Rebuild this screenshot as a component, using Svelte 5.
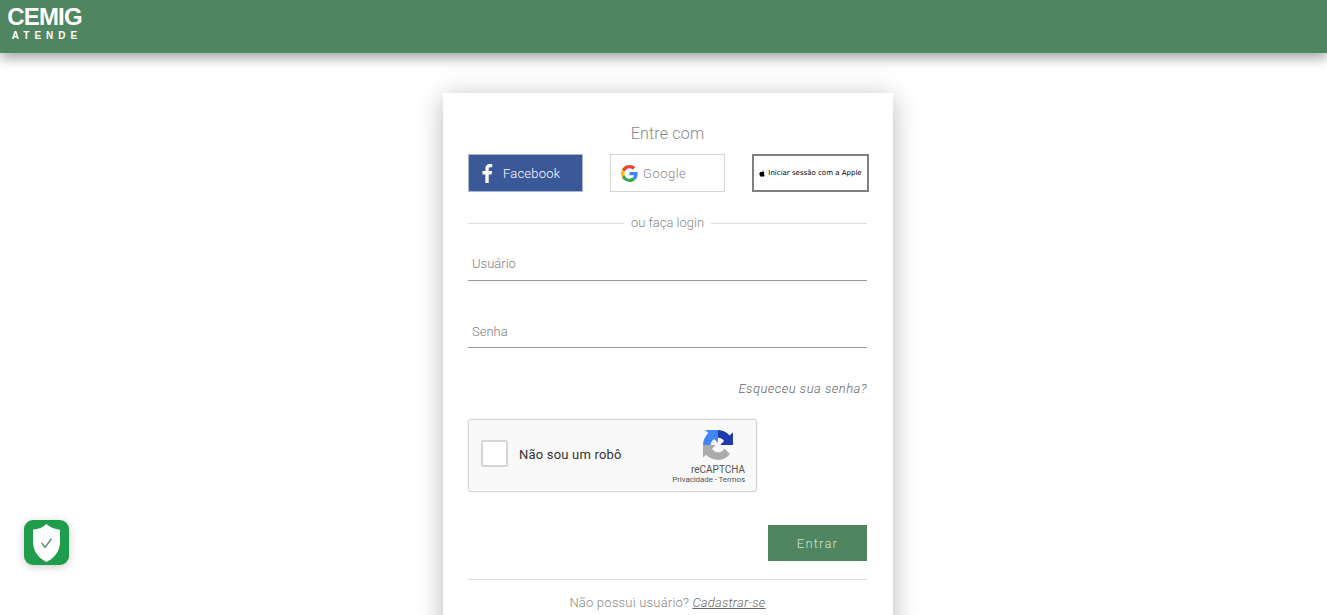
<script lang="ts">
  let usuario = $state('');
  let senha = $state('');
  let robot = $state(false);
</script>

<div class="page">
  <header class="topbar">
    <a class="logo" href="#home">
      <span class="logo__name">CEMIG</span>
      <span class="logo__sub">ATENDE</span>
    </a>
  </header>

  <main class="content">
    <section class="card">
      <h2 class="card__title">Entre com</h2>

      <div class="social">
        <button type="button" class="social__btn social__btn--fb">
          <svg class="fb-icon" viewBox="0 0 12 20" width="12" height="19" aria-hidden="true">
            <path fill="#fff" d="M7.8 20v-9h3l.5-3.6H7.8V5.2c0-1 .3-1.7 1.8-1.7h1.9V.2C11.2.1 10.100 0 8.900 0 6.200 0 4.300 1.700 4.300 4.700v2.700H1.200V11h3.100v9z" />
          </svg>
          <span>Facebook</span>
        </button>
        <button type="button" class="social__btn social__btn--google">
          <svg viewBox="0 0 48 48" width="17" height="17" aria-hidden="true">
            <path fill="#EA4335" d="M24 9.500c3.500 0 6.700 1.200 9.200 3.600l6.900-6.900C35.900 2.400 30.500 0 24 0 14.600 0 6.500 5.400 2.600 13.200l8 6.200C12.400 13.700 17.700 9.500 24 9.500z" />
            <path fill="#4285F4" d="M46.900 24.500c0-1.600-.1-3.100-.4-4.500H24v9h12.900c-.6 3-2.200 5.500-4.700 7.200l7.700 6c4.500-4.200 7-10.300 7-17.700z" />
            <path fill="#FBBC05" d="M10.500 28.600c-.5-1.400-.8-3-.8-4.600s.3-3.200.8-4.600l-8-6.200C.9 16.500 0 20.100 0 24s.9 7.500 2.600 10.800z" />
            <path fill="#34A853" d="M24 48c6.500 0 11.900-2.100 15.900-5.800l-7.700-6c-2.200 1.500-4.900 2.300-8.200 2.300-6.300 0-11.600-4.200-13.500-9.900l-8 6.200C6.500 42.600 14.600 48 24 48z" />
          </svg>
          <span>Google</span>
        </button>
        <button type="button" class="social__btn social__btn--apple">
          <svg viewBox="0 0 14 17" width="6" height="7" aria-hidden="true">
            <path fill="#000" d="M11.600 9c0-2 1.600-3 1.700-3-1-1.400-2.400-1.600-2.900-1.600-1.200-.1-2.400.7-3 .7s-1.600-.7-2.600-.7C3.400 4.400 2.100 5.200 1.400 6.400c-1.400 2.400-.4 6 1 8 .7 1 1.500 2 2.500 2 1 0 1.400-.6 2.600-.6s1.600.6 2.600.6c1.100 0 1.800-1 2.400-2 .8-1.100 1.100-2.200 1.100-2.300 0 0-2-.8-2-3.100zM9.700 3c.5-.7.900-1.600.8-2.500-.8 0-1.700.5-2.300 1.200-.5.600-.9 1.500-.8 2.400.9 0 1.800-.4 2.300-1.100z" />
          </svg>
          <span>Iniciar sessão com a Apple</span>
        </button>
      </div>

      <div class="divider"><span>ou faça login</span></div>

      <form class="login" onsubmit={(e) => e.preventDefault()}>
        <input class="field" type="text" placeholder="Usuário" bind:value={usuario} />
        <input class="field field--senha" type="password" placeholder="Senha" bind:value={senha} />

        <a class="forgot" href="#senha">Esqueceu sua senha?</a>

        <div class="captcha">
          <button type="button" class="captcha__box" aria-label="Não sou um robô" onclick={() => (robot = !robot)}></button>
          <span class="captcha__label">Não sou um robô</span>
          <div class="captcha__brand">
            <svg viewBox="0 0 64 64" width="30" height="30" aria-hidden="true">
              <path fill="#1c3aa9" d="M64 31.955l-.033-1.37V4.687l-7.16 7.16C50.948 4.674 42.033.093 32.05.093c-10.4 0-19.622 4.96-25.458 12.64l11.736 11.86a15.55 15.55 0 0 1 4.754-5.334c2.05-1.6 4.952-2.906 8.968-2.906.485 0 .86.057 1.135.163 4.976.393 9.288 3.14 11.828 7.124l-8.307 8.307 26.287.007" />
              <path fill="#4285f4" d="M31.862.094l-1.37.033H4.594l7.16 7.16C4.58 13.147 0 22.06 0 32.046c0 10.4 4.96 19.622 12.64 25.458l11.86-11.736a15.55 15.55 0 0 1-5.334-4.754c-1.6-2.05-2.906-4.952-2.906-8.968 0-.485.057-.86.163-1.135.393-4.976 3.14-9.288 7.124-11.828l8.307 8.307.007-26.287" />
              <path fill="#ababab" d="M.001 32.045l.033 1.37v25.898l7.16-7.16c5.86 7.173 14.775 11.754 24.76 11.754 10.4 0 19.622-4.96 25.458-12.64l-11.736-11.86a15.55 15.55 0 0 1-4.754 5.334c-2.05 1.6-4.952 2.906-8.968 2.906-.485 0-.86-.057-1.135-.163-4.976-.393-9.288-3.14-11.828-7.124l8.307-8.307-26.287-.007" />
            </svg>
            <span class="captcha__name">reCAPTCHA</span>
            <span class="captcha__links">Privacidade - Termos</span>
          </div>
        </div>

        <div class="actions">
          <button type="submit" class="submit">Entrar</button>
        </div>
      </form>

      <p class="signup">Não possui usuário? <a href="#cadastro">Cadastrar-se</a></p>
    </section>
  </main>

  <button type="button" class="shield" aria-label="Segurança">
    <svg viewBox="0 0 30 36" width="27" height="38" preserveAspectRatio="none" aria-hidden="true">
      <path fill="#fff" d="M15 0C11 3 6 5 0 5.500V17c0 8.500 6 15 15 19C24 32 30 25.500 30 17V5.500C24 5 19 3 15 0z" />
      <path fill="none" stroke="#5f8a70" stroke-width="1.600" d="M9.500 18l4 4 7-8" />
    </svg>
  </button>
</div>

<style>
  :global(body) {
    margin: 0;
    background: #fff;
  }

  .page {
    height: 100vh;
    overflow: hidden;
    font-family: Roboto, "Liberation Sans", sans-serif;
    font-weight: 300;
    color: #777;
  }

  .topbar {
    height: 53px;
    padding-left: 6px;
    background: #4f8560;
    box-shadow: 0 5px 12px rgba(0, 0, 0, 0.36);
    display: flex;
    align-items: flex-start;
  }

  .logo {
    display: flex;
    flex-direction: column;
    align-items: center;
    width: 77px;
    padding-top: 3px;
    color: #fff;
    text-decoration: none;
    font-family: "Liberation Sans", sans-serif;
    font-weight: 700;
  }

  .logo__name {
    font-size: 24px;
    line-height: 27px;
    letter-spacing: -0.8px;
  }

  .logo__sub {
    margin-right: -5px;
    font-size: 10px;
    line-height: 12px;
    letter-spacing: 5px;
  }

  .content {
    display: flex;
    justify-content: center;
    padding: 40px 0 0 9px;
  }

  .card {
    box-sizing: border-box;
    width: 450px;
    height: 600px;
    padding: 0 26px 0 25px;
    background: #fff;
    box-shadow: 0 4px 24px rgba(0, 0, 0, 0.28);
    flex: none;
  }

  .card__title {
    margin: 0;
    padding-top: 31px;
    text-align: center;
    font-size: 16px;
    line-height: 19px;
    font-weight: 300;
    letter-spacing: 0.2px;
    color: #888;
  }

  .social {
    display: flex;
    justify-content: space-between;
    margin-top: 11px;
    margin-right: -2px;
  }

  .social__btn {
    box-sizing: border-box;
    width: 115px;
    height: 38px;
    display: flex;
    align-items: center;
    padding: 0;
    font: inherit;
    font-size: 13px;
    letter-spacing: 0.5px;
    background: #fff;
    cursor: pointer;
  }

  .social__btn--fb {
    padding-left: 12px;
    gap: 10px;
    letter-spacing: 0.2px;
    background: #3b5998;
    border: 1px solid #a9b7d3;
    color: #fff;
  }

  .social__btn--google {
    padding-left: 10px;
    gap: 5px;
    border: 1px solid #d6d6d6;
    color: #888;
  }

  .social__btn--apple {
    width: 117px;
    justify-content: center;
    gap: 3px;
    border: 2px solid #808080;
    color: #000;
    font-family: "DejaVu Sans", sans-serif;
    font-size: 7px;
    font-weight: 400;
    letter-spacing: 0;
    white-space: nowrap;
  }

  .divider {
    display: flex;
    align-items: center;
    gap: 7px;
    margin-top: 22px;
    font-size: 13px;
    line-height: 17px;
    color: #888;
  }

  .divider::before,
  .divider::after {
    content: '';
    flex: 1;
    height: 1px;
    margin-top: 1px;
    background: #ddd;
  }

  .login {
    display: flex;
    flex-direction: column;
    align-items: stretch;
  }

  .field {
    box-sizing: border-box;
    height: 34px;
    margin-top: 16px;
    padding: 0 4px;
    border: 0;
    border-bottom: 1px solid #9a9a9a;
    outline: none;
    font: inherit;
    font-size: 13px;
    color: #555;
    background: transparent;
  }

  .field--senha {
    margin-top: 33px;
    padding-top: 2px;
  }

  .field::placeholder {
    color: #808080;
    opacity: 1;
  }

  .forgot {
    align-self: flex-end;
    margin-top: 32px;
    font-size: 13px;
    line-height: 17px;
    font-style: italic;
    letter-spacing: 0.47px;
    color: #666;
    text-decoration: none;
  }

  .captcha {
    box-sizing: border-box;
    width: 289px;
    height: 73px;
    margin-top: 22px;
    display: flex;
    align-items: center;
    position: relative;
    background: #f9f9f9;
    border: 1px solid #d3d3d3;
    border-radius: 3px;
    box-shadow: 0 0 3px rgba(0, 0, 0, 0.08);
    font-family: Roboto, "Liberation Sans", sans-serif;
    font-weight: 400;
  }

  .captcha__box {
    box-sizing: border-box;
    width: 27px;
    height: 27px;
    margin: 0 0 5px 12px;
    padding: 0;
    background: #fff;
    border: 2px solid #d5d5d5;
    border-radius: 2px;
    cursor: pointer;
  }

  .captcha__label {
    margin-left: 11px;
    margin-bottom: 2px;
    font-size: 13px;
    letter-spacing: 0.2px;
    color: #333;
  }

  .captcha__brand {
    margin-left: auto;
    margin-right: 11px;
    display: flex;
    flex-direction: column;
    align-items: flex-end;
    padding-top: 4px;
  }

  .captcha__brand svg {
    margin-right: 12px;
  }

  .captcha__name {
    margin-top: 4px;
    font-size: 10px;
    line-height: 11px;
    color: #555;
  }

  .captcha__links {
    font-size: 8px;
    line-height: 10px;
    letter-spacing: -0.1px;
    color: #555;
  }

  .actions {
    display: flex;
    justify-content: flex-end;
    margin-top: 33px;
  }

  .submit {
    width: 99px;
    height: 36px;
    padding: 0;
    border: 0;
    background: #4f8560;
    color: #cfe5d3;
    font: inherit;
    font-size: 13px;
    letter-spacing: 1.2px;
    cursor: pointer;
  }

  .signup {
    margin: 18px 0 0;
    padding-top: 14px;
    border-top: 1px solid #ddd;
    text-align: center;
    font-size: 13px;
    line-height: 17px;
    letter-spacing: 0.2px;
    color: #888;
  }

  .signup a {
    font-style: italic;
    color: #666;
  }

  .shield {
    position: fixed;
    left: 24px;
    top: 520px;
    width: 45px;
    height: 45px;
    padding: 0;
    display: flex;
    align-items: center;
    justify-content: center;
    border: 0;
    border-radius: 9px;
    background: #1f9d4d;
    box-shadow: 0 2px 8px rgba(0, 0, 0, 0.2);
    cursor: pointer;
  }
</style>
